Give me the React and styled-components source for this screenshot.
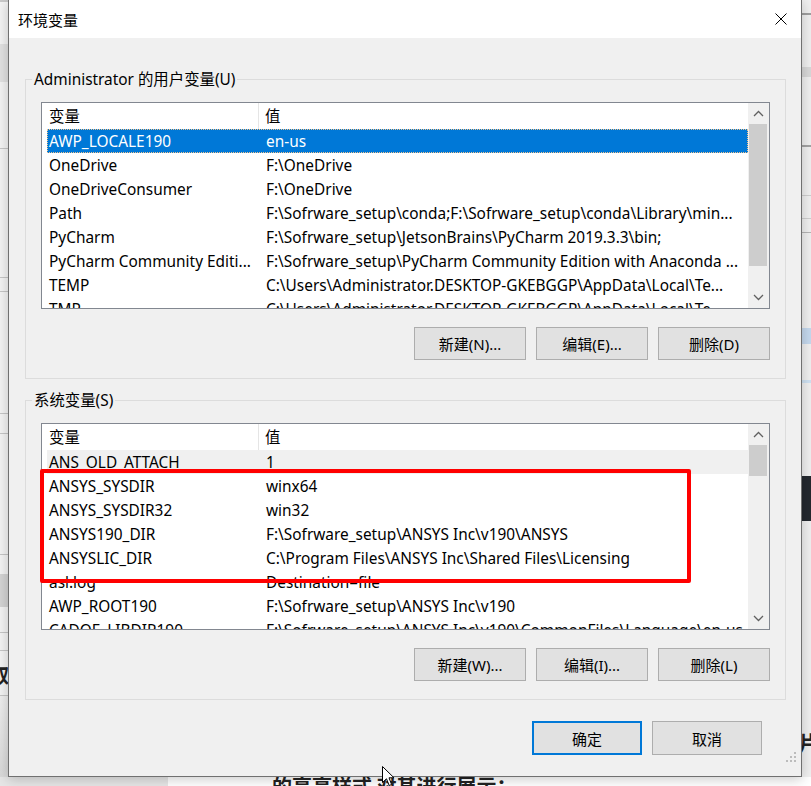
import React from 'react'
import styled, { createGlobalStyle } from 'styled-components'

const GlobalStyle = createGlobalStyle`
  html, body {
    margin: 0;
    padding: 0;
    background: #ffffff;
  }
  body {
    font-family: 'Noto Sans', 'Noto Sans CJK SC', sans-serif;
    color: #000000;
  }
  * {
    box-sizing: border-box;
  }
`

const Screen = styled.div`
  position: relative;
  width: 811px;
  height: 786px;
  overflow: hidden;
  display: flex;
  flex-direction: column;
  background: #ffffff;
`

const Desk = styled.div`
  display: flex;
  height: 777px;
  flex: none;
`

/* what is visible of the windows behind the dialog */
const Backdrop = styled.div`
  width: ${(p) => p.$w}px;
  flex: none;
  display: flex;
  flex-direction: column;
  overflow: hidden;
  background: ${(p) => p.$bg};
`

const Band = styled.div`
  height: ${(p) => p.$h}px;
  flex: none;
  background: ${(p) => p.$bg || 'transparent'};
  font-size: 20px;
  font-weight: 700;
  line-height: ${(p) => p.$h}px;
  color: #222222;
  white-space: nowrap;
  text-indent: ${(p) => p.$indent || 0}px;
  overflow: hidden;
`

const Dialog = styled.div`
  position: relative;
  z-index: 1;
  width: 794px;
  height: 777px;
  flex: none;
  display: flex;
  flex-direction: column;
  background: #f0f0f0;
  border: 1px solid #707070;
  border-top: none;
  box-shadow: 0 2px 12px rgba(0, 0, 0, 0.22);
`

const TitleBar = styled.div`
  height: 38px;
  flex: none;
  display: flex;
  align-items: center;
  justify-content: space-between;
  padding: 0 14px 0 9px;
  background: #ffffff;
  font-family: 'Noto Sans CJK SC', sans-serif;
  font-size: 15px;
`

const Body = styled.div`
  flex: 1;
  display: flex;
  flex-direction: column;
  padding: 0 15px 0 16px;
`

const GroupBox = styled.div`
  margin-top: ${(p) => p.$top}px;
  border: 1px solid #dcdcdc;
  padding: 0 15px 18px 15px;
`

const Caption = styled.div`
  width: fit-content;
  margin: -10px 0 0 -9px;
  padding: 0 2px;
  background: #f0f0f0;
  font-size: 15.4px;
  line-height: 20px;
`

const List = styled.div`
  position: relative;
  margin-top: 12px;
  height: 207px;
  display: flex;
  background: #ffffff;
  border: 1px solid #828790;
`

const ListBody = styled.div`
  flex: 1;
  min-width: 0;
  overflow: hidden;
  display: flex;
  flex-direction: column;
`

const Header = styled.div`
  height: 26px;
  flex: none;
  margin-left: 5px;
  display: grid;
  grid-template-columns: 212px 1fr;
  font-size: 15.4px;
  line-height: 26px;
`

const HeadCell = styled.div`
  padding: 1px 0 0 ${(p) => p.$pad}px;
  border-right: ${(p) => (p.$divider ? '1px solid #e5e5e5' : 'none')};
`

const Row = styled.div`
  height: 24px;
  flex: none;
  margin-left: 5px;
  display: grid;
  grid-template-columns: 217px 1fr;
  font-size: 15.4px;
  line-height: 24px;
  white-space: nowrap;
  overflow: hidden;
  background: ${(p) =>
    p.$state === 'active' ? '#0078d7' : p.$state === 'idle' ? '#f0f0f0' : 'transparent'};
  color: ${(p) => (p.$state === 'active' ? '#ffffff' : '#000000')};
  outline: ${(p) => (p.$state === 'active' ? '1px dotted #f3c48d' : 'none')};
  outline-offset: -1px;
`

const Cell = styled.div`
  padding: 1px 0 0 2px;
  overflow: hidden;
`

const ScrollBar = styled.div`
  width: 21px;
  flex: none;
  display: flex;
  flex-direction: column;
  background: #f0f0f0;
`

const Arrow = styled.div`
  height: 21px;
  flex: none;
  display: flex;
  align-items: center;
  justify-content: center;
`

const Track = styled.div`
  flex: 1;
`

const Thumb = styled.div`
  height: ${(p) => p.$h}px;
  margin: 0 2px 0 1px;
  background: #cdcdcd;
`

const Highlight = styled.div`
  position: absolute;
  left: -2px;
  top: 45px;
  width: 651px;
  height: 114px;
  border: 4px solid #ff0000;
  border-radius: 2px;
  pointer-events: none;
`

const ButtonRow = styled.div`
  display: flex;
  justify-content: flex-end;
  gap: 10px;
  margin-top: 18px;
  padding-right: ${(p) => p.$right || 0}px;
`

const Button = styled.button`
  width: ${(p) => p.$w || 112}px;
  height: ${(p) => p.$h || 33}px;
  padding: 0;
  background: #e1e1e1;
  border: ${(p) => (p.$default ? '2px solid #0078d7' : '1px solid #adadad')};
  font-family: 'Noto Sans', 'Noto Sans CJK SC', sans-serif;
  font-size: 15px;
  color: #000000;
`

const Footer = styled(ButtonRow)`
  margin-top: 21px;
`

const Grip = styled.svg`
  position: absolute;
  right: 3px;
  bottom: 12px;
`

const PageStrip = styled.div`
  height: 9px;
  flex: none;
  display: flex;
  overflow: hidden;
`

const PageSide = styled.div`
  width: 168px;
  flex: none;
  background: #e6e6e6;
`

const PageText = styled.div`
  flex: 1;
  padding-left: 104px;
  font-family: 'Noto Sans CJK SC', sans-serif;
  font-size: 20px;
  font-weight: 700;
  line-height: 20px;
  margin-top: -1px;
  color: #222222;
  white-space: nowrap;
`

const Cursor = styled.svg`
  position: absolute;
  left: 382px;
  top: 766px;
  z-index: 5;
`

const leftBands = [
  { h: 2, bg: '#c9c9c9' },
  { h: 42, bg: '#f4f4f4' },
  { h: 38, bg: '#e2e2e2' },
  { h: 66, bg: '#f4f4f4' },
  { h: 1, bg: '#c6c6c6' },
  { h: 128, bg: '#f4f4f4' },
  { h: 1, bg: '#c6c6c6' },
  { h: 13, bg: '#f4f4f4' },
  { h: 1, bg: '#c6c6c6' },
  { h: 121, bg: '#f4f4f4' },
  { h: 1, bg: '#c6c6c6' },
  { h: 19, bg: '#f4f4f4' },
  { h: 1, bg: '#c6c6c6' },
  { h: 120, bg: '#f4f4f4' },
  { h: 1, bg: '#c6c6c6' },
  { h: 19, bg: '#f4f4f4' },
  { h: 33, bg: '#d4d4d4' },
  { h: 25, bg: '#f4f4f4' },
  { h: 1, bg: '#c6c6c6' },
  { h: 17, bg: '#f4f4f4' },
  { h: 1, bg: '#c6c6c6' },
  { h: 14, bg: '#f4f4f4' },
  { h: 22, bg: '#f4f4f4', text: '取', indent: -11 },
  { h: 8, bg: '#f4f4f4' },
  { h: 1, bg: '#c6c6c6' },
  { h: 81, bg: 'linear-gradient(#efefef, #d9d9d9)' },
]

const rightBands = [
  { h: 13, bg: '#f0f0f0' },
  { h: 2, bg: '#9f9f9f' },
  { h: 52, bg: '#f0f0f0' },
  { h: 10, bg: '#d9d9d9' },
  { h: 68, bg: '#f0f0f0' },
  { h: 2, bg: '#a3a3a3' },
  { h: 48, bg: '#f0f0f0' },
  { h: 1, bg: '#cfcfcf' },
  { h: 22, bg: '#f0f0f0' },
  { h: 1, bg: '#cfcfcf' },
  { h: 13, bg: '#f0f0f0' },
  { h: 1, bg: '#b5b5b5' },
  { h: 95, bg: '#f0f0f0' },
  { h: 16, bg: '#c5d9ee' },
  { h: 36, bg: '#f0f0f0' },
  { h: 3, bg: '#cfe2f3' },
  { h: 93, bg: '#f0f0f0' },
  { h: 45, bg: '#24292f' },
  { h: 212, bg: '#f0f0f0' },
  { h: 22, bg: '#f0f0f0', text: '片', indent: -3 },
  { h: 21, bg: '#f0f0f0' },
]

const userVars = [
  ['AWP_LOCALE190', 'en-us'],
  ['OneDrive', 'F:\\OneDrive'],
  ['OneDriveConsumer', 'F:\\OneDrive'],
  ['Path', 'F:\\Sofrware_setup\\conda;F:\\Sofrware_setup\\conda\\Library\\min...'],
  ['PyCharm', 'F:\\Sofrware_setup\\JetsonBrains\\PyCharm 2019.3.3\\bin;'],
  ['PyCharm Community Editi...', 'F:\\Sofrware_setup\\PyCharm Community Edition with Anaconda ...'],
  ['TEMP', 'C:\\Users\\Administrator.DESKTOP-GKEBGGP\\AppData\\Local\\Te...'],
  ['TMP', 'C:\\Users\\Administrator.DESKTOP-GKEBGGP\\AppData\\Local\\Te...'],
]

const systemVars = [
  ['ANS_OLD_ATTACH', '1'],
  ['ANSYS_SYSDIR', 'winx64'],
  ['ANSYS_SYSDIR32', 'win32'],
  ['ANSYS190_DIR', 'F:\\Sofrware_setup\\ANSYS Inc\\v190\\ANSYS'],
  ['ANSYSLIC_DIR', 'C:\\Program Files\\ANSYS Inc\\Shared Files\\Licensing'],
  ['asl.log', 'Destination=file'],
  ['AWP_ROOT190', 'F:\\Sofrware_setup\\ANSYS Inc\\v190'],
  ['CADOE_LIBDIR190', 'F:\\Sofrware_setup\\ANSYS Inc\\v190\\CommonFiles\\Language\\en-us'],
]

const Chevron = ({ up }) => (
  <svg width='11' height='7' viewBox='0 0 11 7'>
    <path
      d={up ? 'M1 6 L5.5 1.5 L10 6' : 'M1 1 L5.5 5.5 L10 1'}
      fill='none'
      stroke='#606060'
      strokeWidth='1.3'
    />
  </svg>
)

const VarList = ({ rows, selected, thumb, children }) => (
  <List>
    <ListBody>
      <Header>
        <HeadCell $pad={2} $divider>变量</HeadCell>
        <HeadCell $pad={6}>值</HeadCell>
      </Header>
      {rows.map(([name, value], i) => (
        <Row key={name + i} $state={i === 0 ? selected : 'none'}>
          <Cell>{name}</Cell>
          <Cell>{value}</Cell>
        </Row>
      ))}
    </ListBody>
    <ScrollBar>
      <Arrow>
        <Chevron up />
      </Arrow>
      <Track>
        <Thumb $h={thumb} />
      </Track>
      <Arrow>
        <Chevron />
      </Arrow>
    </ScrollBar>
    {children}
  </List>
)

const App = () => (
  <Screen>
    <GlobalStyle />
    <Desk>
      <Backdrop $w={8} $bg='#f4f4f4'>
        {leftBands.map((b, i) => (
          <Band key={i} $h={b.h} $bg={b.bg} $indent={b.indent}>
            {b.text}
          </Band>
        ))}
      </Backdrop>

      <Dialog>
        <TitleBar>
          <span>环境变量</span>
          <svg width='12' height='12' viewBox='0 0 12 12'>
            <path d='M0.5 0.5 L11.5 11.5 M11.5 0.5 L0.5 11.5' stroke='#000' strokeWidth='1' />
          </svg>
        </TitleBar>
        <Body>
          <GroupBox $top={41}>
            <Caption>Administrator 的用户变量(U)</Caption>
            <VarList rows={userVars} selected='active' thumb={142} />
            <ButtonRow>
              <Button>新建(N)...</Button>
              <Button>编辑(E)...</Button>
              <Button>删除(D)</Button>
            </ButtonRow>
          </GroupBox>

          <GroupBox $top={21}>
            <Caption>系统变量(S)</Caption>
            <VarList rows={systemVars} selected='idle' thumb={31}>
              <Highlight />
            </VarList>
            <ButtonRow>
              <Button>新建(W)...</Button>
              <Button>编辑(I)...</Button>
              <Button>删除(L)</Button>
            </ButtonRow>
          </GroupBox>

          <Footer $right={24}>
            <Button $default $w={110} $h={34}>
              确定
            </Button>
            <Button $w={110} $h={34}>
              取消
            </Button>
          </Footer>
        </Body>
        <Grip width='12' height='12' viewBox='0 0 12 12'>
          <g fill='#bcbcbc'>
            <rect x='8' y='0' width='2' height='2' />
            <rect x='4' y='4' width='2' height='2' />
            <rect x='8' y='4' width='2' height='2' />
            <rect x='0' y='8' width='2' height='2' />
            <rect x='4' y='8' width='2' height='2' />
            <rect x='8' y='8' width='2' height='2' />
          </g>
        </Grip>
      </Dialog>

      <Backdrop $w={9} $bg='#f0f0f0'>
        {rightBands.map((b, i) => (
          <Band key={i} $h={b.h} $bg={b.bg} $indent={b.indent}>
            {b.text}
          </Band>
        ))}
      </Backdrop>
    </Desk>

    <PageStrip>
      <PageSide />
      <PageText>的高亮样式 对其进行展示：</PageText>
    </PageStrip>

    <Cursor width='13' height='21' viewBox='0 0 13 21'>
      <path
        d='M0.5 0.5 L0.5 16.5 L4.5 12.8 L7.2 19.5 L9.6 18.5 L7 11.8 L12 11.8 Z'
        fill='#fff'
        stroke='#000'
        strokeWidth='1'
        strokeLinejoin='round'
      />
    </Cursor>
  </Screen>
)

export default App
